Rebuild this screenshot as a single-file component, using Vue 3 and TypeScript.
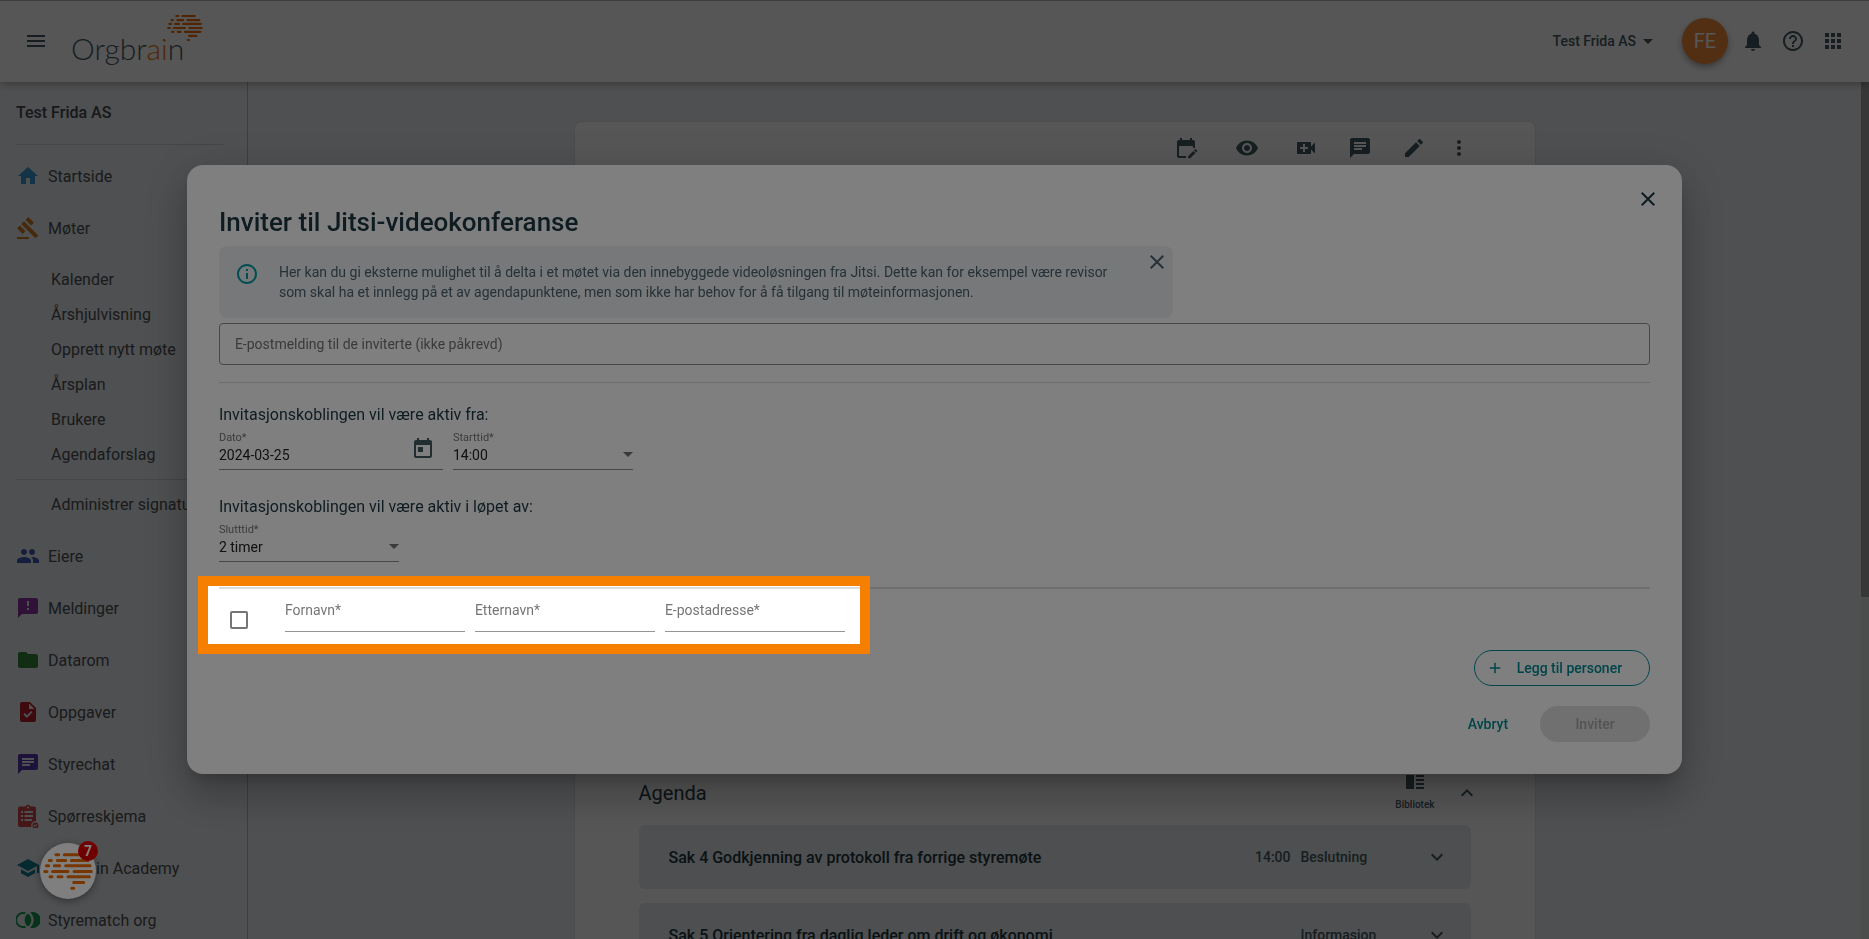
<script setup lang="ts">
import { ref } from 'vue'

interface MenuItem {
  label: string
  icon: string
  color: string
}

interface AgendaItem {
  title: string
  time: string
  kind: string
}

const icons: Record<string, string> = {
  menu: 'M3 18h18v-2H3v2zm0-5h18v-2H3v2zm0-7v2h18V6H3z',
  home: 'M10 20v-6h4v6h5v-8h3L12 3 2 12h3v8z',
  gavel:
    'M1 21h12v2H1zM5.245 8.07l2.83-2.827 14.14 14.142-2.828 2.828zM12.317 1l5.657 5.656-2.83 2.83-5.654-5.66zM3.825 9.485l5.657 5.657-2.828 2.828-5.657-5.657z',
  group:
    'M16 11c1.66 0 2.99-1.34 2.99-3S17.66 5 16 5s-3 1.34-3 3 1.34 3 3 3zm-8 0c1.66 0 2.99-1.34 2.99-3S9.66 5 8 5 5 6.34 5 8s1.34 3 3 3zm0 2c-2.33 0-7 1.17-7 3.5V19h14v-2.5c0-2.33-4.67-3.5-7-3.5zm8 0c-.29 0-.62.02-.97.05 1.16.84 1.97 1.97 1.97 3.45V19h6v-2.5c0-2.33-4.67-3.5-7-3.5z',
  feedback:
    'M20 2H4c-1.1 0-1.99.9-1.99 2L2 22l4-4h14c1.1 0 2-.9 2-2V4c0-1.1-.9-2-2-2zm-7 12h-2v-2h2v2zm0-4h-2V5h2v5z',
  folder: 'M10 4H4c-1.1 0-1.99.9-1.99 2L2 18c0 1.1.9 2 2 2h16c1.1 0 2-.9 2-2V8c0-1.1-.9-2-2-2h-8l-2-2z',
  task:
    'M14 2H6c-1.1 0-1.99.9-1.99 2L4 20c0 1.1.89 2 1.99 2H18c1.1 0 2-.9 2-2V8l-6-6zm-3.06 16L7.4 14.46l1.41-1.41 2.12 2.12 4.24-4.24 1.41 1.41L10.94 18zM13 9V3.5L18.5 9H13z',
  chat:
    'M20 2H4c-1.1 0-1.99.9-1.99 2L2 22l4-4h14c1.1 0 2-.9 2-2V4c0-1.1-.9-2-2-2zM6 9h12v2H6V9zm8 5H6v-2h8v2zm4-6H6V6h12v2z',
  survey:
    'M18 2.500h-3.300a3 3 0 0 0-5.400 0H4a2 2 0 0 0-2 2V21a2 2 0 0 0 2 2h11.500a4.500 4.500 0 0 1 4.500-6V4.500a2 2 0 0 0-2-2zM12 2.500a1 1 0 1 1 0 2 1 1 0 0 1 0-2zM5 7h2v2H5zm3.500 0H17v2H8.500zM5 11h2v2H5zm3.500 0H17v2H8.500zM5 15h2v2H5zm3.500 0H16v2H8.500zM19.500 18.500a3 3 0 1 0 0 6 3 3 0 0 0 0-6zm-.4 4.500l-1.600-1.500.7-.7.9.8 1.700-1.700.7.7z',
  school: 'M5 13.180v4L12 21l7-3.820v-4L12 17l-7-3.820zM12 3L1 9l11 6 9-4.910V17h2V9L12 3z',
  match:
    'M10 4.500A8 8 0 1 0 10 19.500l-1.200-1.800A6 6 0 1 1 8.800 6.300zM12 5.500a8 8 0 0 0 0 13 8 8 0 0 0 0-13zM14 4.500a9.500 9.500 0 0 1 0 15A8 8 0 1 0 14 4.500z',
  calendarEdit:
    'M5 10h14v2h2V6c0-1.100-.9-2-2-2h-1V2h-2v2H8V2H6v2H5c-1.110 0-1.990.9-1.990 2L3 20c0 1.100.89 2 2 2h7v-2H5V10zm17.840 4.280l-.71-.71a1 1 0 0 0-1.410 0l-.71.71 2.120 2.120.71-.71a1 1 0 0 0 0-1.410zM21.420 17.110l-5.180 5.180H14.120v-2.120L19.300 15z',
  eye:
    'M12 4.500C7 4.500 2.730 7.610 1 12c1.730 4.390 6 7.500 11 7.500s9.270-3.110 11-7.500c-1.730-4.390-6-7.500-11-7.500zM12 17c-2.760 0-5-2.240-5-5s2.240-5 5-5 5 2.240 5 5-2.240 5-5 5zm0-8c-1.660 0-3 1.340-3 3s1.340 3 3 3 3-1.340 3-3-1.340-3-3-3z',
  video:
    'M17 10.500V7c0-.55-.45-1-1-1H4c-.55 0-1 .45-1 1v10c0 .55.45 1 1 1h12c.55 0 1-.45 1-1v-3.500l4 4v-11l-4 4zM14 13h-3v3H9v-3H6v-2h3V8h2v3h3v2z',
  edit:
    'M3 17.250V21h3.750L17.810 9.940l-3.750-3.750L3 17.250zM20.710 7.040c.39-.39.39-1.020 0-1.410l-2.340-2.340a1 1 0 0 0-1.410 0l-1.830 1.830 3.750 3.750 1.830-1.830z',
  more:
    'M12 8c1.100 0 2-.9 2-2s-.9-2-2-2-2 .9-2 2 .9 2 2 2zm0 2c-1.100 0-2 .9-2 2s.9 2 2 2 2-.9 2-2-.9-2-2-2zm0 6c-1.100 0-2 .9-2 2s.9 2 2 2 2-.9 2-2-.9-2-2-2z',
  bell:
    'M12 22c1.100 0 2-.9 2-2h-4c0 1.100.89 2 2 2zm6-6v-5c0-3.070-1.640-5.640-4.500-6.320V4c0-.83-.67-1.500-1.500-1.500s-1.500.67-1.500 1.500v.68C7.630 5.360 6 7.920 6 11v5l-2 2v1h16v-1l-2-2z',
  help:
    'M11 18h2v-2h-2v2zm1-16C6.480 2 2 6.480 2 12s4.480 10 10 10 10-4.480 10-10S17.520 2 12 2zm0 18c-4.410 0-8-3.590-8-8s3.590-8 8-8 8 3.590 8 8-3.590 8-8 8zm0-14c-2.210 0-4 1.790-4 4h2c0-1.100.9-2 2-2s2 .9 2 2c0 2-3 1.750-3 5h2c0-2.250 3-2.500 3-5 0-2.210-1.790-4-4-4z',
  apps:
    'M4 8h4V4H4v4zm6 12h4v-4h-4v4zm-6 0h4v-4H4v4zm0-6h4v-4H4v4zm6 0h4v-4h-4v4zm6-10v4h4V4h-4zm-6 4h4V4h-4v4zm6 6h4v-4h-4v4zm0 6h4v-4h-4v4z',
  info:
    'M11 7h2v2h-2zm0 4h2v6h-2zm1-9C6.480 2 2 6.480 2 12s4.480 10 10 10 10-4.480 10-10S17.520 2 12 2zm0 18c-4.410 0-8-3.590-8-8s3.590-8 8-8 8 3.590 8 8-3.590 8-8 8z',
  close: 'M19 6.410L17.590 5 12 10.590 6.410 5 5 6.410 10.590 12 5 17.590 6.410 19 12 13.410 17.590 19 19 17.590 13.410 12z',
  today: 'M19 3h-1V1h-2v2H8V1H6v2H5c-1.110 0-1.990.9-1.990 2L3 19c0 1.100.89 2 2 2h14c1.100 0 2-.9 2-2V5c0-1.100-.9-2-2-2zm0 16H5V8h14v11zM7 10h5v5H7z',
  plus: 'M19 13h-6v6h-2v-6H5v-2h6V5h2v6h6v2z',
  down: 'M7.410 8.590L12 13.170l4.590-4.580L18 10l-6 6-6-6z',
  up: 'M12 8l-6 6 1.410 1.410L12 10.830l4.590 4.580L18 14z',
  library: 'M3 5h8v14H3zM13 5h8v2h-8zM13 9h8v2h-8zM13 13h8v2h-8zM13 17h8v2h-8z',
}

const brainDashes =
  'M168 403h8M193 403h52M148 420h6M172 420h25M214 420h50M139 436h7M163 436h16M197 436h73M134 453h7M158 453h46M222 453h52M150 469h6M174 469h12M204 469h64M221 486h30M215 503h6'

const mainItems: MenuItem[] = [
  { label: 'Startside', icon: 'home', color: '#3997cf' },
  { label: 'Møter', icon: 'gavel', color: '#d07b22' },
]

const meetingLinks = ['Kalender', 'Årshjulvisning', 'Opprett nytt møte', 'Årsplan', 'Brukere', 'Agendaforslag']

const moreItems: MenuItem[] = [
  { label: 'Eiere', icon: 'group', color: '#3f5bb5' },
  { label: 'Meldinger', icon: 'feedback', color: '#8e36a5' },
  { label: 'Datarom', icon: 'folder', color: '#338a3b' },
  { label: 'Oppgaver', icon: 'task', color: '#b7202a' },
  { label: 'Styrechat', icon: 'chat', color: '#5735a8' },
  { label: 'Spørreskjema', icon: 'survey', color: '#d0464c' },
  { label: 'Orgbrain Academy', icon: 'school', color: '#147c92' },
  { label: 'Styrematch org', icon: 'match', color: '#159653' },
]

const tools = [
  { icon: 'calendarEdit', label: 'Rediger dato' },
  { icon: 'eye', label: 'Vis' },
  { icon: 'video', label: 'Videokonferanse' },
  { icon: 'chat', label: 'Kommentarer' },
  { icon: 'edit', label: 'Rediger' },
  { icon: 'more', label: 'Mer' },
]

const agenda: AgendaItem[] = [
  { title: 'Sak 4 Godkjenning av protokoll fra forrige styremøte', time: '14:00', kind: 'Beslutning' },
  { title: 'Sak 5 Orientering fra daglig leder om drift og økonomi', time: '', kind: 'Informasjon' },
]

const message = ref('')
const date = ref('2024-03-25')
const start = ref('14:00')
const duration = ref('2 timer')
const selected = ref(false)
const guest = ref({ first: '', last: '', email: '' })
</script>

<template>
  <div class="app">
    <header class="topbar">
      <button class="icon-btn" aria-label="Meny">
        <svg viewBox="0 0 24 24"><path :d="icons.menu" /></svg>
      </button>
      <a class="logo" href="#" aria-label="Orgbrain">
        <span class="wordmark">Orgbr<span class="accent">ai</span>n</span>
        <svg class="logo-mark" viewBox="129 398 150 110"><path :d="brainDashes" /></svg>
      </a>
      <div class="topbar-right">
        <button class="org-switch">Test Frida AS<span class="caret"></span></button>
        <button class="avatar">FE</button>
        <button class="icon-btn" aria-label="Varsler">
          <svg viewBox="0 0 24 24"><path :d="icons.bell" /></svg>
        </button>
        <button class="icon-btn" aria-label="Hjelp">
          <svg viewBox="0 0 24 24"><path :d="icons.help" /></svg>
        </button>
        <button class="icon-btn" aria-label="Apper">
          <svg viewBox="0 0 24 24"><path :d="icons.apps" /></svg>
        </button>
      </div>
    </header>

    <div class="body">
      <nav class="sidebar">
        <h2 class="org-name">Test Frida AS</h2>
        <hr class="side-rule" />
        <a v-for="item in mainItems" :key="item.label" class="nav-item" href="#">
          <svg viewBox="0 0 24 24" :style="{ fill: item.color }"><path :d="icons[item.icon]" /></svg>
          {{ item.label }}
        </a>
        <div class="sub-nav">
          <a v-for="link in meetingLinks" :key="link" class="sub-item" href="#">{{ link }}</a>
        </div>
        <hr class="side-rule sub-rule" />
        <a class="sub-item last-sub" href="#">Administrer signaturer</a>
        <a v-for="item in moreItems" :key="item.label" class="nav-item" href="#">
          <svg viewBox="0 0 24 24" :style="{ fill: item.color }"><path :d="icons[item.icon]" /></svg>
          {{ item.label }}
        </a>
      </nav>

      <main class="content">
        <article class="card">
          <div class="tools">
            <button v-for="tool in tools" :key="tool.icon" class="icon-btn" :class="tool.icon" :aria-label="tool.label">
              <svg viewBox="0 0 24 24"><path :d="icons[tool.icon]" /></svg>
            </button>
          </div>
          <section class="details"></section>
          <section class="agenda">
            <div class="agenda-head">
              <h3>Agenda</h3>
              <button class="library">
                <svg viewBox="0 0 24 24"><path :d="icons.library" /></svg>
                Bibliotek
              </button>
              <button class="icon-btn" aria-label="Skjul">
                <svg viewBox="0 0 24 24"><path :d="icons.up" /></svg>
              </button>
            </div>
            <div v-for="item in agenda" :key="item.title" class="agenda-item">
              <h4>{{ item.title }}</h4>
              <span class="time">{{ item.time }}</span>
              <span class="kind">{{ item.kind }}</span>
              <button class="icon-btn" aria-label="Vis sak">
                <svg viewBox="0 0 24 24"><path :d="icons.down" /></svg>
              </button>
            </div>
          </section>
        </article>
      </main>
      <div class="scrollbar"><div class="thumb"></div></div>
    </div>

    <div class="backdrop"></div>

    <button class="launcher" aria-label="Hjelpesenter">
      <svg viewBox="129 398 150 110"><path :d="brainDashes" /></svg>
      <span class="badge">7</span>
    </button>

    <div class="dialog-layer">
      <form class="dialog" role="dialog" aria-labelledby="dialog-title" @submit.prevent>
        <button type="button" class="icon-btn dialog-close" aria-label="Lukk">
          <svg viewBox="0 0 24 24"><path :d="icons.close" /></svg>
        </button>
        <h1 id="dialog-title">Inviter til Jitsi-videokonferanse</h1>
        <div class="notice">
          <svg class="notice-icon" viewBox="0 0 24 24"><path :d="icons.info" /></svg>
          <p>
            Her kan du gi eksterne mulighet til å delta i et møtet via den innebyggede videoløsningen fra Jitsi. Dette
            kan for eksempel være revisor som skal ha et innlegg på et av agendapunktene, men som ikke har behov for å
            få tilgang til møteinformasjonen.
          </p>
          <button type="button" class="icon-btn notice-close" aria-label="Lukk melding">
            <svg viewBox="0 0 24 24"><path :d="icons.close" /></svg>
          </button>
        </div>
        <input
          v-model="message"
          class="message"
          type="text"
          aria-label="E-postmelding til de inviterte (ikke påkrevd)"
          placeholder="E-postmelding til de inviterte (ikke påkrevd)"
        />
        <hr class="rule" />

        <h2 class="group-title">Invitasjonskoblingen vil være aktiv fra:</h2>
        <div class="fields">
          <div class="field date-field">
            <label for="date">Dato*</label>
            <input id="date" v-model="date" type="text" />
            <button type="button" class="icon-btn date-btn" aria-label="Velg dato">
              <svg viewBox="0 0 24 24"><path :d="icons.today" /></svg>
            </button>
          </div>
          <div class="field">
            <label for="start">Starttid*</label>
            <select id="start" v-model="start">
              <option>14:00</option>
              <option>15:00</option>
            </select>
            <span class="caret"></span>
          </div>
        </div>

        <h2 class="group-title">Invitasjonskoblingen vil være aktiv i løpet av:</h2>
        <div class="fields">
          <div class="field">
            <label for="duration">Slutttid*</label>
            <select id="duration" v-model="duration">
              <option>1 time</option>
              <option>2 timer</option>
            </select>
            <span class="caret"></span>
          </div>
        </div>
        <hr class="rule thick" />

        <div class="guest">
          <input v-model="selected" class="tick" type="checkbox" aria-label="Velg person" />
          <input v-model="guest.first" class="guest-input" type="text" aria-label="Fornavn" placeholder="Fornavn*" />
          <input v-model="guest.last" class="guest-input" type="text" aria-label="Etternavn" placeholder="Etternavn*" />
          <input
            v-model="guest.email"
            class="guest-input"
            type="email"
            aria-label="E-postadresse"
            placeholder="E-postadresse*"
          />
          <div class="spotlight"></div>
        </div>

        <div class="actions">
          <button type="button" class="btn outlined">
            <svg viewBox="0 0 24 24"><path :d="icons.plus" /></svg>
            Legg til personer
          </button>
        </div>
        <div class="actions">
          <button type="button" class="btn text">Avbryt</button>
          <button type="submit" class="btn filled" disabled>Inviter</button>
        </div>
      </form>
    </div>
  </div>
</template>

<style>
body {
  margin: 0;
  overflow: hidden;
}
</style>

<style scoped>
.app {
  display: flex;
  flex-direction: column;
  height: 100vh;
  overflow: hidden;
  background: #ebedf0;
  color: #455a64;
  font-family: Roboto, "Liberation Sans", sans-serif;
  font-size: 14px;
}
.app *,
.app *::before {
  box-sizing: border-box;
}
h1,
h2,
h3,
h4,
p {
  margin: 0;
}
hr {
  width: auto;
  margin: 0;
  border: 0;
}
a {
  color: inherit;
  text-decoration: none;
}
button,
input,
select {
  margin: 0;
  padding: 0;
  border: 0;
  border-radius: 0;
  outline: 0;
  background: none;
  color: inherit;
  font: inherit;
}
svg {
  display: block;
  flex: none;
  width: 24px;
  height: 24px;
  fill: currentColor;
}
.icon-btn {
  display: flex;
  flex: none;
}
.caret {
  border-top: 5px solid currentColor;
  border-right: 5px solid transparent;
  border-left: 5px solid transparent;
}

.topbar {
  z-index: 1;
  display: flex;
  flex: none;
  align-items: center;
  height: 82px;
  padding: 0 24px;
  background: #fff;
  box-shadow: 0 2px 8px rgba(0, 0, 0, 0.3), inset 0 1px #b4b4b4;
}
.logo {
  display: flex;
  align-items: flex-start;
  margin-left: 23px;
}
.wordmark {
  padding-top: 14px;
  font-family: Lato, "Open Sans", sans-serif;
  font-size: 30px;
  font-weight: 300;
  line-height: 40px;
}
.accent {
  color: #ef7000;
}
.logo-mark {
  width: 36px;
  height: 28px;
  margin-left: -17px;
}
.logo-mark path,
.launcher path {
  fill: none;
  stroke: #ef6c00;
  stroke-width: 9;
  stroke-linecap: round;
}
.topbar-right {
  display: flex;
  align-items: center;
  gap: 16px;
  margin-left: auto;
}
.org-switch {
  display: flex;
  align-items: center;
  gap: 7px;
  margin-right: 13px;
  font-weight: 500;
}
.avatar {
  width: 46px;
  height: 46px;
  margin-right: -3px;
  border-radius: 50%;
  background: #f28a35;
  box-shadow: 0 3px 6px rgba(0, 0, 0, 0.35);
  color: #fff;
  font-size: 20px;
}

.body {
  display: flex;
  flex: 1;
  min-height: 0;
}
.sidebar {
  flex: none;
  width: 248px;
  overflow: hidden;
  border-right: 1px solid #b5b9be;
  color: #4b5154;
  font-size: 16px;
}
.org-name {
  margin: 21px 16px;
  color: #444a4e;
  font-size: 16px;
  font-weight: 500;
  line-height: 20px;
}
.side-rule {
  height: 1px;
  margin: 0 23px 5px 16px;
  background: #cacdd0;
}
.nav-item {
  display: flex;
  align-items: center;
  gap: 8px;
  height: 52px;
  padding-left: 16px;
  white-space: nowrap;
}
.sub-nav {
  padding: 8px 0 7px;
}
.sub-item {
  display: block;
  padding-left: 51px;
  line-height: 35px;
  white-space: nowrap;
}
.sub-rule {
  margin-bottom: 7px;
}
.last-sub {
  margin-bottom: 8px;
}
.content {
  flex: 1;
  min-width: 0;
  overflow: hidden;
  padding-top: 40px;
}
.card {
  width: 960px;
  margin: 0 auto;
  padding: 0 64px;
  border-radius: 6px;
  background: #fff;
  box-shadow: 0 0 2px rgba(0, 0, 0, 0.2);
}
.tools {
  display: flex;
  justify-content: flex-end;
  gap: 30px;
  padding: 14px 0;
}
.tools .calendarEdit {
  margin-right: 7px;
}
.tools .eye {
  margin-right: 5px;
}
.tools .more {
  margin-left: -9px;
}
.details {
  height: 591px;
}
.agenda-head {
  display: flex;
  align-items: center;
  height: 60px;
  margin-right: -8px;
  padding-bottom: 4px;
}
.agenda-head h3 {
  flex: 1;
  color: #263c44;
  font-size: 20px;
  font-weight: 400;
}
.library {
  display: flex;
  flex-direction: column;
  align-items: center;
  gap: 5px;
  margin-right: 20px;
  margin-bottom: 5px;
  font-size: 10px;
  font-weight: 500;
  line-height: 12px;
}
.agenda-item {
  display: flex;
  align-items: center;
  height: 64px;
  margin-bottom: 14px;
  padding: 0 22px 0 30px;
  border-radius: 6px;
  background: #e8eaed;
  font-weight: 500;
}
.agenda-item h4 {
  flex: 1;
  color: #203740;
  font-size: 16px;
  font-weight: 500;
}
.kind {
  width: 134px;
  padding-left: 10px;
}
.scrollbar {
  flex: none;
  width: 8px;
  background: #dfe0e1;
}
.thumb {
  height: 515px;
  background: #a3a4a5;
}

.backdrop {
  position: fixed;
  inset: 0;
  z-index: 10;
  background: rgba(0, 0, 0, 0.32);
}
.launcher {
  position: fixed;
  bottom: 40px;
  left: 40px;
  z-index: 20;
  display: grid;
  place-items: center;
  width: 56px;
  height: 56px;
  border-radius: 50%;
  background: #fff;
  box-shadow: 0 2px 8px rgba(0, 0, 0, 0.4);
}
.launcher svg {
  width: 50px;
  height: 37px;
}
.badge {
  position: absolute;
  top: -2px;
  right: -2px;
  width: 20px;
  height: 20px;
  border-radius: 50%;
  background: #e00000;
  color: #fff;
  font-size: 14px;
  font-weight: 700;
  line-height: 20px;
  text-align: center;
}

.dialog-layer {
  position: fixed;
  inset: 0;
  z-index: 30;
  display: grid;
  place-items: center;
}
.dialog {
  position: relative;
  width: 80vw;
  padding: 41px 32px 32px;
  border-radius: 16px;
  background: #fff;
  box-shadow: 0 11px 15px -7px rgba(0, 0, 0, 0.2), 0 24px 38px 3px rgba(0, 0, 0, 0.14),
    0 9px 46px 8px rgba(0, 0, 0, 0.12);
  color: #1c3742;
}
.dialog-close {
  position: absolute;
  top: 22px;
  right: 22px;
}
h1 {
  margin-bottom: 7px;
  font-size: 26px;
  font-weight: 500;
  line-height: 33px;
}
.notice {
  display: flex;
  position: relative;
  width: 66.67%;
  margin-bottom: 5px;
  padding: 16px 60px 16px 16px;
  border-radius: 8px;
  background: #edf0f2;
  color: #4c6570;
}
.notice-icon {
  margin-right: 20px;
  color: #009da6;
}
.notice p {
  line-height: 20px;
}
.notice-close {
  position: absolute;
  top: 4px;
  right: 4px;
}
.message {
  display: block;
  width: 100%;
  height: 42px;
  padding: 0 15px;
  border: 1px solid #8f8f8f;
  border-radius: 4px;
}
.message::placeholder {
  color: #757575;
  opacity: 1;
}
.rule {
  height: 1px;
  margin: 17px 0 22px;
  background: #dcdcdc;
}
.rule.thick {
  height: 2px;
  margin: 25px 0 0;
}
.group-title {
  margin-bottom: 6px;
  font-size: 16px;
  font-weight: 400;
  line-height: 20px;
}
.fields {
  display: flex;
  gap: 10px;
}
.fields + .group-title {
  margin-top: 27px;
}
.field {
  position: relative;
  display: flex;
  flex-direction: column;
  width: 180px;
  height: 39px;
  border-bottom: 1px solid #8f8f8f;
  color: #222;
}
.date-field {
  width: 224px;
}
.field label {
  color: #777;
  font-size: 11px;
  line-height: 14px;
}
.field input,
.field select {
  width: 100%;
  height: 20px;
  appearance: none;
}
.field .caret {
  position: absolute;
  right: 0;
  bottom: 12px;
  color: #757575;
}
.date-btn {
  position: absolute;
  right: 8px;
  bottom: 8px;
  color: #455a64;
}
.guest {
  position: relative;
  display: flex;
  align-items: flex-end;
  gap: 10px;
  width: max-content;
  padding: 11px 0 0 11px;
}
.tick {
  width: 18px;
  height: 18px;
  margin: 0 27px 3px 0;
  border: 2px solid #757575;
  border-radius: 2px;
  appearance: none;
}
.tick:checked {
  background: #009da6;
}
.guest-input {
  width: 180px;
  height: 32px;
  padding-bottom: 11px;
  border-bottom: 1px solid #949494;
  line-height: 20px;
}
.guest-input::placeholder {
  color: #757575;
  opacity: 1;
}
.spotlight {
  position: absolute;
  inset: -13px -25px -22px -21px;
  border: 10px solid #f77f00;
  box-shadow: 0 0 0 100vmax rgba(0, 0, 0, 0.5);
  pointer-events: none;
}
.actions {
  display: flex;
  justify-content: flex-end;
  gap: 16px;
  margin-top: 20px;
}
.guest + .actions {
  margin-top: 18px;
}
.btn {
  display: flex;
  align-items: center;
  justify-content: center;
  height: 36px;
  border-radius: 18px;
  font-weight: 500;
}
.outlined {
  gap: 13px;
  padding: 0 27px 0 11px;
  border: 1px solid #009099;
  color: #008a93;
}
.outlined svg {
  width: 18px;
  height: 18px;
}
.text {
  padding: 0 16px;
  color: #008a93;
}
.filled {
  width: 110px;
  background: #e0e0e0;
  color: #a6a6a6;
}
</style>
